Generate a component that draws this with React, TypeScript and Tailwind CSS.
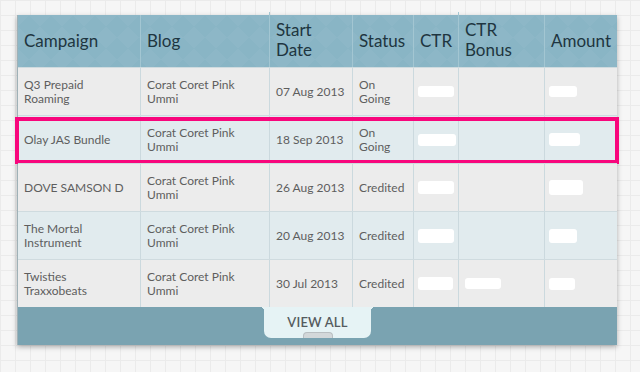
import { FC, ReactNode } from "react";
import clsx from "clsx";

type Blob = { w: number; h: number };

type Row = {
  campaign: ReactNode;
  blog: ReactNode;
  start: string;
  status: ReactNode;
  ctr: Blob;
  bonus?: Blob;
  amount: Blob;
  tint?: boolean;
  picked?: boolean;
};

const blog = (
  <>
    Corat Coret Pink
    <br />
    Ummi
  </>
);

const rows: Row[] = [
  {
    campaign: (
      <>
        Q3 Prepaid
        <br />
        Roaming
      </>
    ),
    blog,
    start: "07 Aug 2013",
    status: (
      <>
        On
        <br />
        Going
      </>
    ),
    ctr: { w: 36, h: 11 },
    amount: { w: 28, h: 11 },
  },
  {
    campaign: "Olay JAS Bundle",
    blog,
    start: "18 Sep 2013",
    status: (
      <>
        On
        <br />
        Going
      </>
    ),
    ctr: { w: 38, h: 12 },
    amount: { w: 31, h: 13 },
    tint: true,
    picked: true,
  },
  {
    campaign: "DOVE SAMSON D",
    blog,
    start: "26 Aug 2013",
    status: "Credited",
    ctr: { w: 36, h: 13 },
    amount: { w: 34, h: 15 },
  },
  {
    campaign: (
      <>
        The Mortal
        <br />
        Instrument
      </>
    ),
    blog,
    start: "20 Aug 2013",
    status: "Credited",
    ctr: { w: 36, h: 14 },
    amount: { w: 28, h: 14 },
    tint: true,
  },
  {
    campaign: (
      <>
        Twisties
        <br />
        Traxxobeats
      </>
    ),
    blog,
    start: "30 Jul 2013",
    status: "Credited",
    ctr: { w: 35, h: 13 },
    bonus: { w: 36, h: 11 },
    amount: { w: 26, h: 12 },
  },
];

const cols = "grid grid-cols-[122px_129px_83px_61px_45px_86px_74px]";

// white patch hiding a figure
const Mask: FC<{ b?: Blob }> = ({ b }) =>
  b ? <span className="block rounded-[3px] bg-white" style={{ width: b.w, height: b.h }} /> : null;

const Cell: FC<{ children?: ReactNode; first?: boolean; className?: string }> = ({ children, first, className }) => (
  <div className={clsx("flex items-center", !first && "border-l border-[#cbd9de]", className)}>{children}</div>
);

export default function App() {
  return (
    <div
      className="h-[372px] w-[640px] overflow-hidden bg-[#f6f6f6] bg-[linear-gradient(to_right,#ebebeb_1px,transparent_1px),linear-gradient(to_bottom,#ebebeb_1px,transparent_1px)] bg-[size:15px_15px] pl-[17px] pt-[15px]"
      style={{ fontFamily: "Lato, 'Open Sans', sans-serif" }}
    >
      <div className="w-[600px] border-l border-[#9fb1b7] shadow-[0_2px_5px_rgba(0,0,0,0.3)]">
        {/* header */}
        <div
          className={clsx(
            cols,
            "h-[52px] bg-[#89b5c5] bg-[linear-gradient(45deg,rgba(255,255,255,0.03)_25%,transparent_25%,transparent_75%,rgba(255,255,255,0.03)_75%),linear-gradient(-45deg,rgba(255,255,255,0.03)_25%,transparent_25%,transparent_75%,rgba(255,255,255,0.03)_75%)] bg-[size:22px_22px] text-[17px] leading-[20px] text-[#1e3540]"
          )}
        >
          {[
            "Campaign",
            "Blog",
            <>
              Start
              <br />
              Date
            </>,
            "Status",
            "CTR",
            <>
              CTR
              <br />
              Bonus
            </>,
            "Amount",
          ].map((h, i) => (
            <div
              key={i}
              className={clsx(
                "flex items-center px-[6px]",
                i === 0 && "pl-[6px]",
                i > 0 && "border-l border-[#a3c6d2]",
                (i === 2 || i === 5) && "-mt-[3px]"
              )}
            >
              <span>{h}</span>
            </div>
          ))}
        </div>

        {/* body */}
        {rows.map((r, i) => (
          <div
            key={i}
            className={clsx(
              cols,
              "relative h-[48px] border-t border-[#cfdbdf] text-[12px] leading-[14px] text-[#5e5e5e]",
              r.tint ? "bg-[#e1ebee]" : "bg-[#ececec]"
            )}
          >
            <Cell first className="pl-[6px]">
              <span>{r.campaign}</span>
            </Cell>
            <Cell className="px-[6px]">
              <span>{r.blog}</span>
            </Cell>
            <Cell className="px-[6px]">{r.start}</Cell>
            <Cell className="px-[6px]">
              <span>{r.status}</span>
            </Cell>
            <Cell className="pl-[4px]">
              <Mask b={r.ctr} />
            </Cell>
            <Cell className="pl-[6px]">
              <Mask b={r.bonus} />
            </Cell>
            <Cell className="pl-[4px]">
              <Mask b={r.amount} />
            </Cell>
            {r.picked && (
              <div className="pointer-events-none absolute -left-[3px] -right-[2px] top-[1px] -bottom-[1px] border-[4px] border-[#f8067c]" />
            )}
          </div>
        ))}

        {/* footer */}
        <div className="flex h-[38px] justify-center bg-[#7aa3b1]">
          <div className="relative flex h-[31px] w-[107px] flex-col items-center rounded-b-[7px] bg-[#e6f3f5]">
            <span className="absolute -left-[4px] top-0 h-[4px] w-[4px] bg-[radial-gradient(circle_at_0_100%,transparent_4px,#e6f3f5_4px)]" />
            <span className="absolute -right-[4px] top-0 h-[4px] w-[4px] bg-[radial-gradient(circle_at_100%_100%,transparent_4px,#e6f3f5_4px)]" />
            <span className="mt-[7px] text-[13px] font-semibold leading-[16px] tracking-[0.2px] text-[#555b5e]">VIEW ALL</span>
            <span className="mt-auto h-[6px] w-[30px] rounded-t-[4px] border border-b-0 border-[#b9bfc2] bg-[#d3d8da]" />
          </div>
        </div>
      </div>
    </div>
  );
}
